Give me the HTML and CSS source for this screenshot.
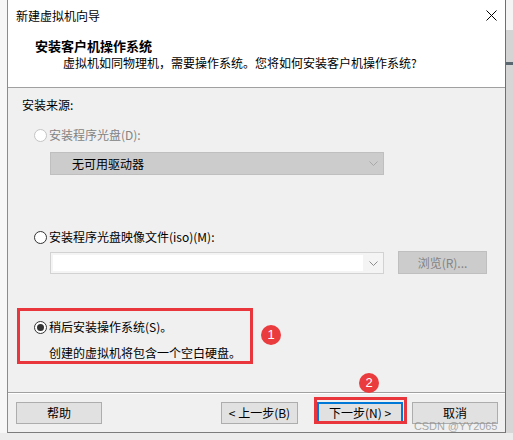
FILE: index.html
```html
<!DOCTYPE html>
<html lang="zh-CN">
<head>
<meta charset="utf-8">
<title>新建虚拟机向导</title>
<link rel="stylesheet" href="styles.css">
</head>
<body>
<div class="screen">
  <div class="left-gap"></div>
  <div class="window">
    <div class="titlebar">
      <span class="title-text">新建虚拟机向导</span>
      <svg class="close" width="11" height="11" viewBox="0 0 11 11"><path d="M0.5 0.5 L10.5 10.5 M10.5 0.5 L0.5 10.5" stroke="#000" stroke-width="1" fill="none"/></svg>
    </div>
    <div class="header">
      <div class="heading">安装客户机操作系统</div>
      <div class="subtitle">虚拟机如同物理机，需要操作系统。您将如何安装客户机操作系统?</div>
    </div>
    <div class="content">
      <div class="label">安装来源:</div>
      <div class="radio-row disabled first">
        <span class="radio"></span><span>安装程序光盘(D):</span>
      </div>
      <div class="select disabled-select">
        <span>无可用驱动器</span>
        <svg class="chev" width="9" height="5" viewBox="0 0 9 5"><path d="M0.5 0.5 L4.5 4.5 L8.5 0.5" stroke="#a8a8a8" fill="none"/></svg>
      </div>
      <div class="radio-row second">
        <span class="radio"></span><span>安装程序光盘映像文件(iso)(M):</span>
      </div>
      <div class="iso-row">
        <div class="combo">
          <div class="combo-edit"></div>
          <svg class="chev" width="9" height="5" viewBox="0 0 9 5"><path d="M0.5 0.5 L4.5 4.5 L8.5 0.5" stroke="#8c8c8c" fill="none"/></svg>
        </div>
        <div class="browse">浏览(R)...</div>
      </div>
      <div class="later-box">
        <div class="radio-row">
          <span class="radio checked"></span><span>稍后安装操作系统(S)。</span>
        </div>
        <div class="later-note">创建的虚拟机将包含一个空白硬盘。</div>
      </div>
      <div class="badge badge-one">1</div>
    </div>
    <div class="footer">
      <div class="btn">帮助</div>
      <div class="spacer"></div>
      <div class="btn btn-back">&lt; 上一步(B)</div>
      <div class="btn btn-next">下一步(N) &gt;</div>
      <div class="btn btn-cancel">取消</div>
    </div>
    <div class="next-highlight"></div>
    <div class="badge badge-two">2</div>
    <div class="watermark">CSDN @YY2065</div>
  </div>
  <div class="right-strip">
    <div class="strip-top"></div>
    <div class="strip-mid"></div>
    <div class="strip-line"></div>
    <div class="strip-low"></div>
  </div>
</div>
</body>
</html>
```
FILE: styles.css
```css
* { box-sizing: border-box; }
html, body {
  margin: 0;
  padding: 0;
}
body {
  width: 513px;
  height: 440px;
  overflow: hidden;
  background: #ececec;
  font-family: "Noto Sans CJK SC", "Noto Sans", sans-serif;
  font-size: 12px;
  color: #000;
}
.screen {
  display: flex;
  height: 433px;
}
.left-gap {
  width: 7px;
  background: #f7f7f7;
}
.window {
  position: relative;
  width: 499px;
  height: 433px;
  border-left: 1px solid #8c8c8c;
  border-right: 1px solid #6f6f6f;
  border-bottom: 1px solid #7c7c7c;
  background: #f0f0f0;
  display: flex;
  flex-direction: column;
}
.right-strip {
  flex: 1;
  display: flex;
  flex-direction: column;
}
.strip-top { height: 30px; background: #f4f4f4; }
.strip-mid { height: 32px; background: #d4d4d4; }
.strip-line { height: 3px; background: #5a6670; }
.strip-low { flex: 1; background: #d6d6d6; }

.titlebar {
  height: 30px;
  background: #fff;
  display: flex;
  align-items: center;
  justify-content: space-between;
  padding: 2px 8px 0 8px;
  line-height: 16px;
}
.close { margin-top: -2px; }

.header {
  height: 58px;
  background: #fff;
  border-bottom: 1px solid #a0a0a0;
  padding: 8px 0 0 27px;
}
.heading {
  font-size: 13px;
  font-weight: bold;
  line-height: 16px;
}
.subtitle {
  line-height: 17px;
  padding-left: 28px;
}

.content {
  position: relative;
  height: 304px;
  padding-left: 14px;
  background: #f0f0f0;
}
.label {
  margin-top: 9px;
  line-height: 16px;
}
.radio-row {
  display: flex;
  align-items: center;
  gap: 2px;
  height: 16px;
  line-height: 16px;
  margin-left: 12px;
}
.radio-row.first { margin-top: 14px; }
.radio-row.second { margin-top: 54px; }
.radio-row.disabled { color: #838383; }
.radio {
  width: 13px;
  height: 13px;
  border: 1px solid #333;
  border-radius: 50%;
  background: #fff;
  display: flex;
  align-items: center;
  justify-content: center;
}
.radio-row.disabled .radio {
  border-color: #c4c4c4;
}
.radio.checked::after {
  content: "";
  width: 7px;
  height: 7px;
  border-radius: 50%;
  background: #333;
}

.select {
  margin-top: 9px;
  margin-left: 28px;
  width: 334px;
  height: 23px;
  display: flex;
  align-items: center;
  justify-content: space-between;
  padding: 0 5px 0 21px;
  line-height: 16px;
}
.disabled-select {
  background: #cccccc;
  border: 1px solid #bfbfbf;
}

.iso-row {
  display: flex;
  align-items: flex-start;
  gap: 14px;
  margin-top: 6px;
  margin-left: 28px;
}
.combo {
  margin-top: 1px;
  width: 334px;
  height: 22px;
  border: 1px solid #d2d2d2;
  background: #f4f4f4;
  display: flex;
  align-items: center;
  padding: 2px 5px 2px 2px;
}
.combo-edit {
  flex: 1;
  height: 100%;
  background: #fff;
  margin-right: 6px;
}
.browse {
  width: 89px;
  height: 23px;
  background: #cccccc;
  border: 1px solid #bfbfbf;
  color: #838383;
  display: flex;
  align-items: center;
  justify-content: center;
  line-height: 16px;
}

.later-box {
  margin-top: 34px;
  margin-left: -5px;
  width: 236px;
  height: 56px;
  border: 3px solid #e8363c;
  padding: 8px 0 0 2px;
}
.later-box .radio-row { margin-left: 12px; }
.later-note {
  margin-top: 10px;
  margin-left: 27px;
  line-height: 16px;
}

.badge {
  position: absolute;
  width: 20px;
  height: 20px;
  border-radius: 50%;
  background: #ea3b3e;
  color: #fff;
  font-family: "Liberation Sans", Arial, sans-serif;
  font-size: 13px;
  line-height: 20px;
  text-align: center;
}
.badge-one { left: 253px; top: 237px; }
.badge-two { left: 351px; top: 373px; }

.footer {
  height: 40px;
  border-top: 1px solid #a0a0a0;
  box-shadow: inset 0 1px 0 #fff;
  padding: 9px 7px 0 8px;
  display: flex;
  align-items: flex-start;
  background: #f0f0f0;
}
.spacer { flex: 1; }
.btn {
  width: 86px;
  height: 22px;
  background: #e1e1e1;
  border: 1px solid #adadad;
  display: flex;
  align-items: center;
  justify-content: center;
  line-height: 14px;
}
.btn-back { width: 77px; }
.btn-next {
  margin-left: 19px;
  border: 2px solid #0078d7;
}
.btn-cancel { margin-left: 9px; }

.next-highlight {
  position: absolute;
  left: 306px;
  top: 397px;
  width: 93px;
  height: 27px;
  border: 3px solid #e8363c;
}
.watermark {
  position: absolute;
  left: 406px;
  top: 421px;
  font-family: "Liberation Sans", Arial, sans-serif;
  font-size: 11px;
  line-height: 11px;
  color: rgba(140, 140, 140, 0.75);
  letter-spacing: -0.1px;
}
```
